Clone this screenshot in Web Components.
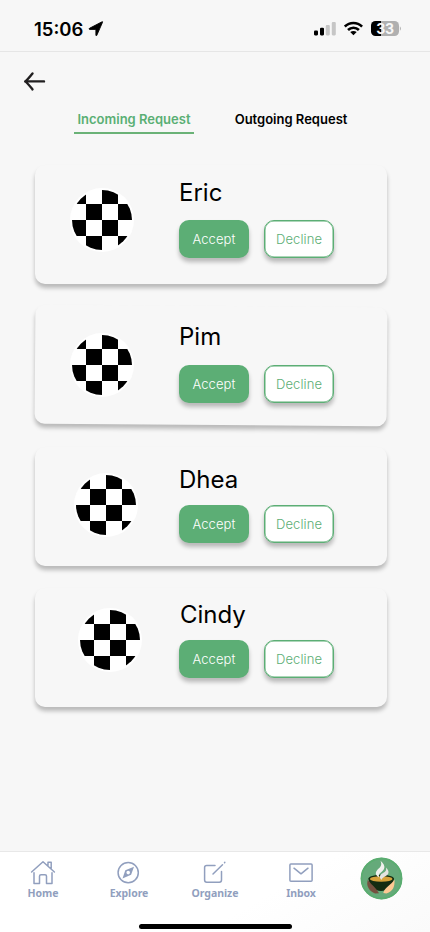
<!DOCTYPE html>
<html lang="en">
<head>
<meta charset="utf-8">
<title>Requests</title>
<style>
html,body{margin:0;padding:0;background:#f7f7f7}
body{width:430px;height:932px;overflow:hidden;font-family:Inter,"Liberation Sans",sans-serif;color:#000}
</style>
</head>
<body>
<request-app></request-app>
<script>
const define = (name, html) => {
  const t = document.createElement('template');
  t.innerHTML = html;
  customElements.define(name, class extends HTMLElement {
    constructor() {
      super();
      this.attachShadow({mode: 'open'}).append(t.content.cloneNode(true));
    }
  });
};

define('status-bar', `
<style>
:host{display:flex;box-sizing:border-box;height:52px;border-bottom:1px solid #e6e6e6;padding:0 28px 0 34px;justify-content:space-between}
.time,.sys{display:flex}
.time{font-size:18.5px;font-weight:600;line-height:24px;padding-top:17px;letter-spacing:0}
.time svg{margin:4px 0 0 5px}
.sys{padding-top:21px}
.sys svg{display:block}
.bat{font:700 14px/15px Inter,"Liberation Sans",sans-serif;color:#f7f7f7;width:28px;height:15px;border-radius:4.5px;background:linear-gradient(90deg,#000 0 9.5px,#b0b0b0 9.5px);text-align:center;margin-left:8px;letter-spacing:-.2px}
</style>
<div class="time"><span>15:06</span><svg width="16" height="16" viewBox="0 0 16 16"><path stroke="#000" stroke-width=".9" stroke-linejoin="round" d="M14.5 1.3 8.8 14.3Q8.3 15.4 7.9 14.2V8.4H1.7Q0.2 8 1.5 7.3L13.6 1Q15.1 .3 14.5 1.3Z"/></svg></div>
<div class="sys">
<svg width="24" height="15" viewBox="0 0 24 15"><rect x="0" y="9.4" width="4" height="5" rx="1.1"/><rect x="6" y="6.8" width="4" height="7.6" rx="1.1"/><rect x="11.8" y="4" width="4" height="10.4" rx="1.1" fill="#c6c6c6"/><rect x="17.8" y="1" width="4" height="13.4" rx="1.1" fill="#c6c6c6"/></svg>
<svg width="19" height="15" viewBox="0 0 19 15" fill="none" stroke="#000" stroke-width="2.6" style="margin-left:6px"><path d="M.8 5.6C5.7.7 13.1.7 18.1 5.6"/><path d="M4 9C7.1 5.9 11.8 5.9 14.9 9"/><path d="M6.2 11Q9.4 8.8 12.7 11L9.45 14.2Z" fill="#000" stroke="none"/></svg>
<div class="bat">33</div>
<svg width="3" height="15" viewBox="0 0 3 15"><path d="M.9 5.2Q3 7.5 .9 9.8Z" fill="#b0b0b0"/></svg>
</div>`);

define('back-button', `
<style>:host{display:block;height:22px;padding:19px 0 0 23px}svg{display:block}</style>
<svg width="23" height="22" viewBox="0 0 23 22" fill="none" stroke="#211f20" stroke-width="2.4" stroke-linecap="round" stroke-linejoin="round"><path d="M21 10.4H2.2M9.5 2.4C6.8 5.8 4.5 8.7 2.2 10.4 4.5 12.1 6.8 15 9.5 18.4"/></svg>`);

define('tab-item', `
<style>
:host{display:block;box-sizing:border-box;width:120px;height:27px;text-align:center;font-size:13px;font-weight:600;line-height:25px;white-space:nowrap}
:host([active]){color:#5aaf74;border-bottom:2px solid #6ab277}
</style><slot></slot>`);

define('check-avatar', `
<style>:host{display:block;width:64px;height:64px}svg{display:block}</style>
<svg width="64" height="64" viewBox="0 0 64 64"><defs><pattern id="c" width="32" height="32" patternUnits="userSpaceOnUse"><path d="M16 16H32V32H16ZM0 0H16V16H0Z"/></pattern></defs><circle cx="32" cy="32" r="32" fill="#fff"/><circle cx="32" cy="32" r="30" fill="url(#c)"/></svg>`);

define('action-button', `
<style>
:host{display:block;box-sizing:border-box;width:70px;height:38px;border-radius:10px;background:#5cae75;color:#fff;text-align:center;font-size:13px;line-height:39px;font-weight:350;letter-spacing:.1px;box-shadow:0 4px 4px rgba(0,0,0,.25)}
:host([outline]){background:#fff;color:#5cae75;border:1px solid #5cae75;box-shadow:inset 0 0 0 .5px #5cae75,0 4px 4px rgba(0,0,0,.25);line-height:37px}
</style><slot></slot>`);

define('request-card', `
<style>
:host{display:grid;grid-template-columns:144px 1fr;width:352px;height:122px}
.face,.body,.surface{grid-row:1}
.surface{grid-column:1/3;margin-top:3px;border-radius:10px;background:#f7f7f7;box-shadow:0 4px 4px rgba(0,0,0,.25);transform:rotate(var(--tilt,0deg))}
.face{grid-column:1;padding:var(--face-top,26px) 0 0 var(--face-left,35px);z-index:1}
.body{grid-column:2;z-index:1}
.name{font-size:24px;font-weight:400;line-height:30px;height:30px;padding:var(--name-top,16px) 0 0 var(--name-left,0px);margin-bottom:var(--gap,12px)}
.buttons{display:flex;gap:15px}
</style>
<div class="surface"></div>
<div class="face"><check-avatar></check-avatar></div>
<div class="body"><div class="name"><slot></slot></div><div class="buttons"><action-button>Accept</action-button><action-button outline>Decline</action-button></div></div>`);

define('nav-item', `
<style>
:host{display:flex;flex-direction:column;align-items:center;width:86px;color:#919fbe}
.label{font:700 10.5px/14px "Noto Sans","Open Sans",sans-serif;letter-spacing:-.05px}
</style><slot name="icon"></slot><div class="label"><slot></slot></div>`);

define('bottom-nav', `
<style>
:host{display:flex;flex-direction:column;box-sizing:border-box;height:81px;border-top:1px solid #e8e8e8;background:linear-gradient(150deg,#fff 60%,#fafafa)}
.row{display:flex;height:72px}
nav-item{padding-top:8px;height:50px}
svg{display:block}
.me{padding:5px 0 0 16px}
.bar{width:153px;height:5px;border-radius:3px;background:#000;margin:0 auto;flex:none}
</style>
<div class="row">
<nav-item><svg slot="icon" width="26" height="26" viewBox="0 0 26 26" fill="none" stroke="currentColor" stroke-width="1.5" stroke-linejoin="round" stroke-linecap="round"><path d="M1.6 12 13 1.8 24.4 12M4 12.8V23.4H9.5V16.3Q9.5 14.8 11 14.8H15Q16.5 14.8 16.5 16.3V23.4H22V12.8M18 5.5V2.2H21.2V8.5"/></svg>Home</nav-item>
<nav-item><svg slot="icon" width="26" height="26" viewBox="0.5 0 26 26"><circle cx="12.7" cy="12.7" r="10.1" fill="none" stroke="currentColor" stroke-width="1.5"/><path fill="currentColor" fill-rule="evenodd" d="M18.5 6.8 15.6 14.8 7 18.4 9.8 10.3ZM12.7 10.8A1.8 1.8 0 1 0 12.7 14.4 1.8 1.8 0 0 0 12.7 10.8Z"/></svg>Explore</nav-item>
<nav-item><svg slot="icon" width="26" height="26" viewBox="0 0 26 26" fill="none" stroke="currentColor" stroke-width="1.5" stroke-linecap="round" stroke-linejoin="round"><path d="M13 5.4H4.7Q2.6 5.4 2.6 7.5V20.1Q2.6 22.2 4.7 22.2H17.4Q19.5 22.2 19.5 20.1V11.5M11 14 20.5 4.7M22.5 2.7 22.8 2.4"/></svg>Organize</nav-item>
<nav-item><svg slot="icon" width="26" height="26" viewBox="0 0 26 26" fill="none" stroke="currentColor" stroke-width="1.5" stroke-linecap="round" stroke-linejoin="round"><rect x="1.9" y="4" width="22.2" height="17.2" rx="1"/><path d="M6 8.2 13 13.8 20 8.2"/></svg>Inbox</nav-item>
<div class="me"><svg width="43" height="43" viewBox="0 0 43 43"><circle cx="21.5" cy="21.5" r="20.7" fill="#65aa7a"/><circle cx="21.5" cy="21.5" r="20" fill="none" stroke="#5aad70" stroke-width="1.8"/><path d="M8.6 21.5C9.2 29 14.3 34 21 34S33.2 29 33.9 21.5Z" fill="#142c12"/><ellipse cx="21.2" cy="21.7" rx="12.8" ry="3.9" fill="#142c12"/><ellipse cx="21.2" cy="22" rx="11.3" ry="2.7" fill="#d6a23b"/><path d="M7.8 22.4C10.3 27 16.5 30.8 19 36.3L15.2 36.5C10.5 34.7 7.2 31 7.2 26.3Z" fill="#76503f"/><path d="M34.5 22.5C34.8 29.5 33.6 34 26.4 36.5L23.3 36C24.6 30 31 28.4 34.5 22.5Z" fill="#fdc893"/><path d="M20.5 3.8C26.8 9.5 24.6 12.8 20.3 16.1 18.6 17.4 18.5 18.8 19.3 20.5 13.9 18 15.7 14.2 18.7 11.6 21.5 9.2 21.8 7 20.5 3.8Z" fill="#f1f1ef"/><path d="M26 10.4C30.2 14.8 28.7 17.6 24.9 19.5 22.4 20.8 22 21.7 21.5 23 18.3 19.5 20.2 17.4 23.4 15.7 26.1 14.3 26.5 12.6 26 10.4Z" fill="#e4e4e1"/></svg></div>
</div>
<div class="bar"></div>`);

define('request-app', `
<style>
:host{display:flex;flex-direction:column;width:430px;height:932px;background:#f7f7f7}
.tabs{display:flex;gap:37px;padding:14px 0 0 74px}
.list{display:flex;flex-direction:column;gap:19px;padding:28px 0 0 35px;flex:1}
.pim{--tilt:.45deg;--face-top:30px;--name-top:19px;--gap:13px}
.dhea{--face-top:29px;--face-left:39px;--name-top:21px;--gap:10px}
.cindy{--face-top:23px;--face-left:43px;--name-top:15px;--gap:10px;--name-left:1px}
</style>
<status-bar></status-bar>
<back-button></back-button>
<div class="tabs"><tab-item active>Incoming Request</tab-item><tab-item>Outgoing Request</tab-item></div>
<div class="list">
<request-card class="eric">Eric</request-card>
<request-card class="pim">Pim</request-card>
<request-card class="dhea">Dhea</request-card>
<request-card class="cindy">Cindy</request-card>
</div>
<bottom-nav></bottom-nav>`);
</script>
</body>
</html>
